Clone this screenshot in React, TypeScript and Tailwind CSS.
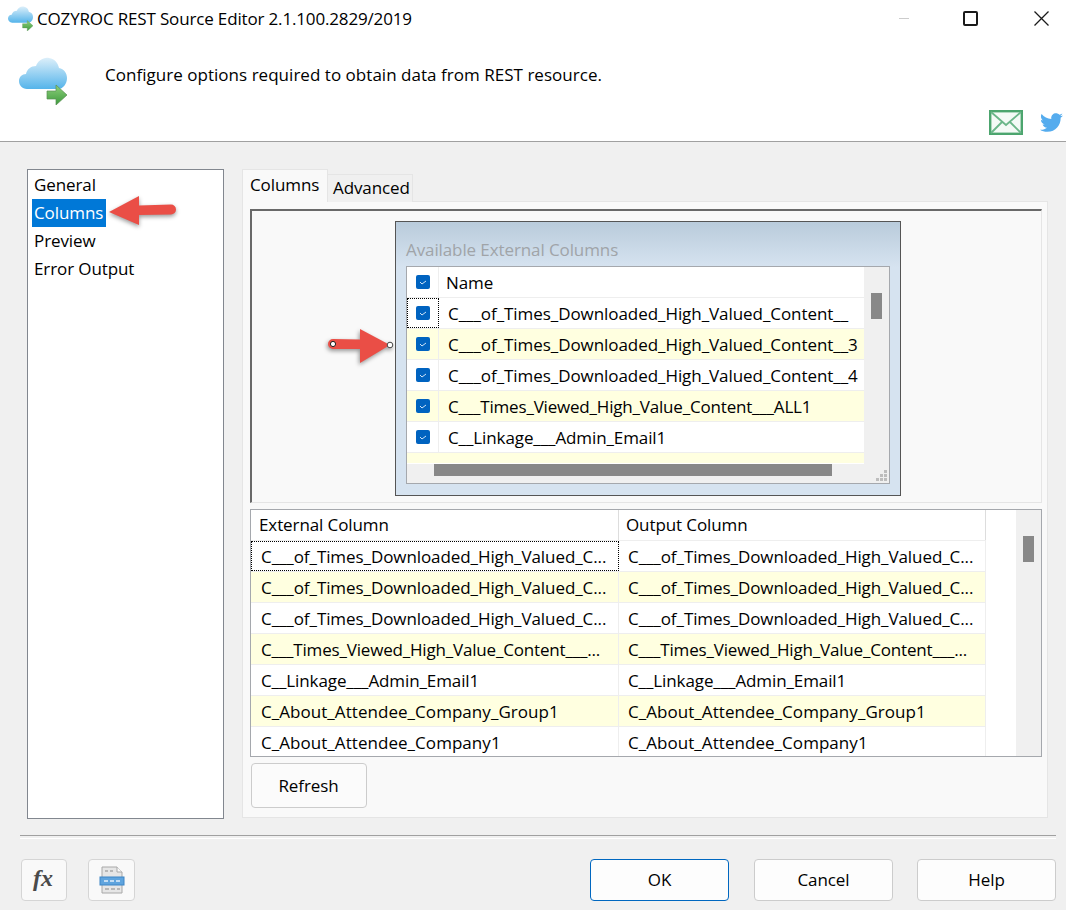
import { FaTwitter } from 'react-icons/fa';

const FONT = "font-['Open_Sans',sans-serif] text-[17px] tracking-[-0.1px] text-black";

const availableRows = [
  { name: 'C___of_Times_Downloaded_High_Valued_Content__', alt: false, focus: true, track: 'tracking-[-0.06px]' },
  { name: 'C___of_Times_Downloaded_High_Valued_Content__3', alt: true, track: 'tracking-[-0.06px]' },
  { name: 'C___of_Times_Downloaded_High_Valued_Content__4', alt: false, track: 'tracking-[-0.06px]' },
  { name: 'C___Times_Viewed_High_Value_Content___ALL1', alt: true, track: 'tracking-[-0.19px]' },
  { name: 'C__Linkage___Admin_Email1', alt: false, track: '' },
];

const mappingRows = [
  { name: 'C___of_Times_Downloaded_High_Valued_C...', alt: false, focus: true, track: 'tracking-[-0.08px]' },
  { name: 'C___of_Times_Downloaded_High_Valued_C...', alt: true, track: 'tracking-[-0.08px]' },
  { name: 'C___of_Times_Downloaded_High_Valued_C...', alt: false, track: 'tracking-[-0.08px]' },
  { name: 'C___Times_Viewed_High_Value_Content___...', alt: true, track: 'tracking-[-0.18px]' },
  { name: 'C__Linkage___Admin_Email1', alt: false, track: '' },
  { name: 'C_About_Attendee_Company_Group1', alt: true, track: 'tracking-[0.05px]' },
  { name: 'C_About_Attendee_Company1', alt: false, track: 'tracking-[0.05px]' },
];

function CloudIcon({ size }: { size: number }) {
  return (
    <svg width={size} height={size} viewBox="0 0 48 48">
      <defs>
        <linearGradient id={`cloud${size}`} x1="0" y1="0" x2="0" y2="1">
          <stop offset="0" stopColor="#dceffa" />
          <stop offset="1" stopColor="#55b4ea" />
        </linearGradient>
        <linearGradient id={`arrow${size}`} x1="0" y1="0" x2="0" y2="1">
          <stop offset="0" stopColor="#8fd07c" />
          <stop offset="1" stopColor="#3c9a3c" />
        </linearGradient>
      </defs>
      <path
        d="M8 32C3 32 0 28 0 24c0-4 3-7 7-7 1-5 5-8 10-8 2-5 7-9 13-8 6 1 9 5 10 10 5 1 8 5 8 10 0 6-4 11-9 11H8z"
        fill={`url(#cloud${size})`}
      />
      <path d="M28 34h9v-6l11 10-11 10v-6h-9z" fill={`url(#arrow${size})`} stroke="#5a8f55" strokeWidth="0.7" />
    </svg>
  );
}

function CheckBox() {
  return (
    <div className="w-[14px] h-[14px] rounded-[2px] bg-[#0063c0] flex items-center justify-center">
      <svg width="8" height="6" viewBox="0 0 8 6">
        <path d="M1 3l2 2 4-3" fill="none" stroke="#cfe4f7" strokeWidth="1" />
      </svg>
    </div>
  );
}

function DialogButton({ label, primary }: { label: string; primary?: boolean }) {
  return (
    <button
      className={`w-[139px] h-[42px] rounded-[4px] border bg-[#fdfdfd] ${primary ? 'border-[#0067c0]' : 'border-[#cccccc]'} ${FONT}`}
    >
      {label}
    </button>
  );
}

export default function App() {
  return (
    <div className={`relative w-[1066px] h-[910px] overflow-hidden bg-[#f0f0f0] ${FONT}`}>
      {/* header */}
      <header className="relative h-[142px] bg-white border-b border-[#a0a0a0]">
        <div className="flex items-center h-[36px] pl-[8px]">
          <CloudIcon size={25} />
          <span className="ml-[4px] leading-none tracking-[-0.16px]">COZYROC REST Source Editor 2.1.100.2829/2019</span>
          <div className="ml-auto mr-[18px] flex items-center">
            <div className="w-[10px] h-px bg-[#cccccc]" />
            <div className="ml-[54px] w-[15px] h-[15px] rounded-[2px] border-2 border-[#1a1a1a]" />
            <svg className="ml-[56px] -mr-px" width="15" height="15" viewBox="0 0 15 15">
              <path d="M0.5 0.5l14 14M14.5 0.5l-14 14" stroke="#1a1a1a" strokeWidth="1.3" />
            </svg>
          </div>
        </div>
        <div className="flex pl-[19px] mt-[21px]">
          <CloudIcon size={48} />
          <span className="ml-[38px] leading-[36px] tracking-[0.03px]">Configure options required to obtain data from REST resource.</span>
        </div>
        <div className="absolute right-[3px] top-[110px] flex items-center gap-[17px]">
          <svg width="34" height="25" viewBox="0 0 34 25">
            <rect x="1.2" y="1.2" width="31.6" height="22.6" fill="#f4faf6" stroke="#4ca56e" strokeWidth="2.4" />
            <path d="M2 2l15 13L32 2M2 23l11-11M32 23L21 12" fill="none" stroke="#6bb689" strokeWidth="1.8" />
          </svg>
          <FaTwitter size={23} color="#55acee" />
        </div>
      </header>

      {/* body */}
      <div className="flex pl-[27px] pt-[27px]">
        <ul className="w-[197px] h-[650px] bg-white border border-[#82878f] pl-[4px] pt-[1px]">
          <li className="h-[28px] leading-[28px] px-[2px]">General</li>
          <li className="h-[28px] leading-[28px] px-[2px] w-[74px] bg-[#0078d7] text-white">Columns</li>
          <li className="h-[28px] leading-[28px] px-[2px]">Preview</li>
          <li className="h-[28px] leading-[28px] px-[2px]">Error Output</li>
        </ul>

        <div className="ml-[18px] w-[806px]">
          {/* tabs */}
          <div className="flex items-end h-[33px]">
            <div className="w-[86px] h-[33px] bg-[#f9f9f9] border border-b-0 border-[#e5e5e5] pl-[7px] leading-[29px] relative z-10">
              Columns
            </div>
            <div className="w-[85px] h-[28px] bg-[#f0f0f0] border border-l-0 border-b-0 border-[#e5e5e5] pl-[5px] leading-[25px]">
              Advanced
            </div>
          </div>

          <div className="h-[617px] -mt-px bg-[#f9f9f9] border border-[#e5e5e5] pl-[7px] pt-[7px] pr-[6px]">
            {/* diagram */}
            <div className="h-[294px] w-[792px] border-t-2 border-l-2 border-[#696969] border-r border-b border-r-[#e5e5e5] border-b-[#e5e5e5] bg-[#f9f9f9] pl-[143px] pt-[10px]">
              <div className="w-[506px] h-[275px] border border-[#555555] bg-[linear-gradient(to_bottom,#b9cbdb_0,#d6e3f0_45px,#d6e3f0_100%)] pl-[10px]">
                <div className="h-[44px] pt-[16px] leading-[24px] text-[#a0a4a8]">Available External Columns</div>
                <div className="w-[484px] h-[218px] border border-[#a5a8ad] bg-[#f0f0f0] relative overflow-hidden">
                  <div className="w-[457px] h-[197px] bg-white overflow-hidden">
                    <div className="flex h-[31px] border-b border-[#eeeeee]">
                      <div className="w-[32px] border-r border-[#eeeeee] flex items-center justify-center">
                        <CheckBox />
                      </div>
                      <div className="pl-[7px] leading-[32px]">Name</div>
                    </div>
                    {availableRows.map((row) => (
                      <div
                        key={row.name}
                        className={`flex h-[31px] border-b border-[#eeeeee] ${row.alt ? 'bg-[#ffffe0]' : 'bg-white'}`}
                      >
                        <div
                          className={`w-[32px] flex items-center justify-center ${row.focus ? 'border border-dotted border-black' : 'border-r border-[#eeeeee]'}`}
                        >
                          <CheckBox />
                        </div>
                        <div className={`pl-[9px] leading-[32px] whitespace-nowrap ${row.track}`}>{row.name}</div>
                      </div>
                    ))}
                    <div className="flex h-[10px] bg-[#ffffe0]" />
                  </div>
                  <div className="absolute left-[464px] top-[26px] w-[11px] h-[26px] bg-[#888888]" />
                  <div className="absolute left-[27px] top-[197px] w-[398px] h-[12px] bg-[#888888]" />
                  <svg className="absolute right-[1px] bottom-[1px]" width="12" height="12" viewBox="0 0 12 12">
                    <path d="M8 0h3v3H8zM4 4h3v3H4zM8 4h3v3H8zM0 8h3v3H0zM4 8h3v3H4zM8 8h3v3H8z" fill="#bdbdbd" />
                  </svg>
                </div>
              </div>
            </div>

            {/* mapping table */}
            <div className="mt-[6px] w-[792px] h-[248px] border border-[#a5a8ad] bg-[#f0f0f0] flex overflow-hidden">
              <div className="w-[765px] bg-white overflow-hidden">
                <div className="flex w-[735px] h-[31px] border-b border-[#eeeeee]">
                  <div className="w-[368px] border-r border-[#dddddd] pl-[8px] leading-[30px]">External Column</div>
                  <div className="w-[367px] border-r border-[#dddddd] pl-[7px] leading-[30px]">Output Column</div>
                </div>
                {mappingRows.map((row, i) => (
                  <div key={i} className={`flex w-[735px] h-[31px] border-b border-[#eeeeee] ${row.alt ? 'bg-[#ffffe0]' : 'bg-white'} ${row.track}`}>
                    <div
                      className={`w-[368px] whitespace-nowrap overflow-hidden ${row.focus ? 'leading-[29px] pl-[9px] border border-dotted border-black' : 'leading-[31px] pl-[10px] border-r border-[#eeeeee]'}`}
                    >
                      {row.name}
                    </div>
                    <div className="w-[367px] pl-[9px] leading-[31px] whitespace-nowrap overflow-hidden border-r border-[#eeeeee]">
                      {row.name}
                    </div>
                  </div>
                ))}
              </div>
              <div className="pl-[7px] pt-[26px]">
                <div className="w-[11px] h-[26px] bg-[#888888]" />
              </div>
            </div>

            <button className={`block mt-[6px] ml-px w-[116px] h-[45px] rounded-[4px] border border-[#cccccc] bg-[#fbfbfb] pr-px ${FONT}`}>Refresh</button>
          </div>
        </div>
      </div>

      {/* footer */}
      <div className="mt-[16px] ml-[20px] w-[1036px] h-[2px] border-t border-[#a0a0a0] border-b border-b-white box-content" />
      <div className="flex items-center pl-[21px] pr-[10px] mt-[20px]">
        <div className="w-[46px] h-[42px] rounded-[4px] border border-[#d5d5d5] bg-[#f9f9f9] flex items-center justify-center pb-[4px] pr-[2px] font-['Liberation_Serif',serif] italic font-bold text-[24px] text-[#4a4a4a]">
          fx
        </div>
        <div className="ml-[21px] w-[47px] h-[42px] rounded-[4px] border border-[#d5d5d5] bg-[#f9f9f9] flex items-center justify-center">
          <svg width="26" height="28" viewBox="0 0 26 28">
            <path d="M3 1h15l5 5v21H3z" fill="#e6e6e6" stroke="#a8a8a8" />
            <path d="M18 1v5h5" fill="#fafafa" stroke="#a8a8a8" />
            <path d="M6 5h3M11 5h3M6 23h4M12 23h4M18 23h3" stroke="#a8a8a8" strokeWidth="1.5" />
            <rect x="1" y="11" width="24" height="8" fill="#5fa4de" stroke="#3f86c6" />
            <path d="M5 15h4M11 15h4M17 15h4" stroke="#e4f0fb" strokeWidth="1.5" />
          </svg>
        </div>
        <div className="ml-auto flex">
          <DialogButton label="OK" primary />
          <div className="w-[25px]" />
          <DialogButton label="Cancel" />
          <div className="w-[24px]" />
          <DialogButton label="Help" />
        </div>
      </div>

      {/* callout arrows */}
      <svg className="absolute left-[100px] top-[190px] pointer-events-none drop-shadow-[0px_2px_2px_rgba(0,0,0,0.4)]" width="90" height="45" viewBox="0 0 90 45">
        <path d="M9 22L39 6v9.5l32-1a5 5 0 0 1 0 10L39 25v10z" fill="#ea4e46" />
      </svg>
      <svg className="absolute left-[325px] top-[325px] pointer-events-none drop-shadow-[-1px_2px_2px_rgba(0,0,0,0.4)]" width="72" height="38" viewBox="0 0 72 38">
        <path d="M8 14l27 .5V4l30 16-30 18V24L8 24a5 5 0 0 1 0-10z" fill="#ea4e46" />
        <circle cx="8" cy="19" r="2.6" fill="#fff" stroke="#222" />
        <circle cx="65" cy="20" r="2.8" fill="#fff" stroke="#444" />
      </svg>
    </div>
  );
}
